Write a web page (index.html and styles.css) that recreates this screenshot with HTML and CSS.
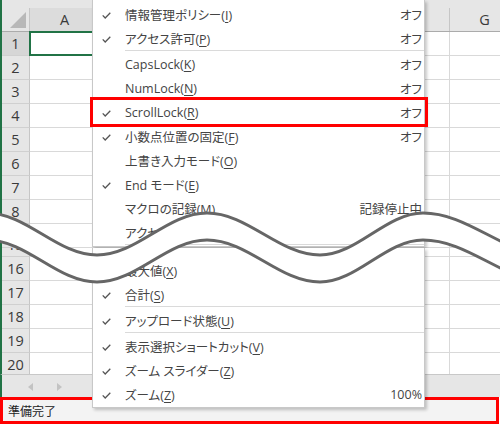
FILE: index.html
```html
<!DOCTYPE html>
<html lang="ja">
<head>
<meta charset="utf-8">
<title>Excel status bar menu</title>
<link rel="stylesheet" href="styles.css">
</head>
<body>
<div class="screen">
  <div class="panel panel-top">
    <div class="sheet">
      <div class="col-head">
        <div class="corner"><span class="tri"></span></div>
        <div class="ch sel">A</div><div class="ch"></div><div class="ch"></div><div class="ch"></div><div class="ch"></div><div class="ch"></div><div class="ch">G</div>
      </div>
      <div class="row"><div class="rh sel">1</div><div class="cell active"></div><div class="cell"></div><div class="cell"></div><div class="cell"></div><div class="cell"></div><div class="cell"></div><div class="cell"></div></div>
      <div class="row"><div class="rh">2</div><div class="cell"></div><div class="cell"></div><div class="cell"></div><div class="cell"></div><div class="cell"></div><div class="cell"></div><div class="cell"></div></div>
      <div class="row"><div class="rh">3</div><div class="cell"></div><div class="cell"></div><div class="cell"></div><div class="cell"></div><div class="cell"></div><div class="cell"></div><div class="cell"></div></div>
      <div class="row"><div class="rh">4</div><div class="cell"></div><div class="cell"></div><div class="cell"></div><div class="cell"></div><div class="cell"></div><div class="cell"></div><div class="cell"></div></div>
      <div class="row"><div class="rh">5</div><div class="cell"></div><div class="cell"></div><div class="cell"></div><div class="cell"></div><div class="cell"></div><div class="cell"></div><div class="cell"></div></div>
      <div class="row"><div class="rh">6</div><div class="cell"></div><div class="cell"></div><div class="cell"></div><div class="cell"></div><div class="cell"></div><div class="cell"></div><div class="cell"></div></div>
      <div class="row"><div class="rh">7</div><div class="cell"></div><div class="cell"></div><div class="cell"></div><div class="cell"></div><div class="cell"></div><div class="cell"></div><div class="cell"></div></div>
      <div class="row"><div class="rh">8</div><div class="cell"></div><div class="cell"></div><div class="cell"></div><div class="cell"></div><div class="cell"></div><div class="cell"></div><div class="cell"></div></div>
      <div class="row"><div class="rh">9</div><div class="cell"></div><div class="cell"></div><div class="cell"></div><div class="cell"></div><div class="cell"></div><div class="cell"></div><div class="cell"></div></div>
    </div>
    <div class="menu menu-top">
      <div class="item"><span class="chk"><svg width="9" height="7" viewBox="0 0 9 7"><path d="M0.7 3.4 L3.2 6 L8.3 0.8" fill="none" stroke="#555" stroke-width="1.3"/></svg></span><span class="label">情報管理ポリシー(<u>I</u>)</span><span class="val">オフ</span></div>
      <div class="item"><span class="chk"><svg width="9" height="7" viewBox="0 0 9 7"><path d="M0.7 3.4 L3.2 6 L8.3 0.8" fill="none" stroke="#555" stroke-width="1.3"/></svg></span><span class="label">アクセス許可(<u>P</u>)</span><span class="val">オフ</span></div>
      <div class="sep"></div>
      <div class="item"><span class="chk"></span><span class="label">CapsLock(<u>K</u>)</span><span class="val">オフ</span></div>
      <div class="item"><span class="chk"></span><span class="label">NumLock(<u>N</u>)</span><span class="val">オフ</span></div>
      <div class="item hl"><span class="chk"><svg width="9" height="7" viewBox="0 0 9 7"><path d="M0.7 3.4 L3.2 6 L8.3 0.8" fill="none" stroke="#555" stroke-width="1.3"/></svg></span><span class="label">ScrollLock(<u>R</u>)</span><span class="val">オフ</span></div>
      <div class="item"><span class="chk"><svg width="9" height="7" viewBox="0 0 9 7"><path d="M0.7 3.4 L3.2 6 L8.3 0.8" fill="none" stroke="#555" stroke-width="1.3"/></svg></span><span class="label">小数点位置の固定(<u>F</u>)</span><span class="val">オフ</span></div>
      <div class="item"><span class="chk"></span><span class="label">上書き入力モード(<u>O</u>)</span><span class="val"></span></div>
      <div class="item"><span class="chk"><svg width="9" height="7" viewBox="0 0 9 7"><path d="M0.7 3.4 L3.2 6 L8.3 0.8" fill="none" stroke="#555" stroke-width="1.3"/></svg></span><span class="label">End モード(<u>E</u>)</span><span class="val"></span></div>
      <div class="item"><span class="chk"></span><span class="label">マクロの記録(<u>M</u>)</span><span class="val">記録停止中</span></div>
      <div class="item"><span class="chk"></span><span class="label">アクセシビリティ チェック</span><span class="val"></span></div>
      <div class="sep"></div>
    </div>
  </div>

  <div class="panel panel-bottom">
    <div class="sheet sheet-bottom">
      <div class="rows-bottom">
        <div class="row"><div class="rh">15</div><div class="cell"></div><div class="cell"></div><div class="cell"></div><div class="cell"></div><div class="cell"></div><div class="cell"></div><div class="cell"></div></div>
        <div class="row"><div class="rh">16</div><div class="cell"></div><div class="cell"></div><div class="cell"></div><div class="cell"></div><div class="cell"></div><div class="cell"></div><div class="cell"></div></div>
        <div class="row"><div class="rh">17</div><div class="cell"></div><div class="cell"></div><div class="cell"></div><div class="cell"></div><div class="cell"></div><div class="cell"></div><div class="cell"></div></div>
        <div class="row"><div class="rh">18</div><div class="cell"></div><div class="cell"></div><div class="cell"></div><div class="cell"></div><div class="cell"></div><div class="cell"></div><div class="cell"></div></div>
        <div class="row"><div class="rh">19</div><div class="cell"></div><div class="cell"></div><div class="cell"></div><div class="cell"></div><div class="cell"></div><div class="cell"></div><div class="cell"></div></div>
        <div class="row"><div class="rh">20</div><div class="cell"></div><div class="cell"></div><div class="cell"></div><div class="cell"></div><div class="cell"></div><div class="cell"></div><div class="cell"></div></div>
      </div>
    </div>
    <div class="tabbar">
      <svg class="arrow" width="5" height="8" viewBox="0 0 5 8"><path d="M5 0 L0 4 L5 8 Z" fill="#c3c3c3"/></svg>
      <svg class="arrow" width="5" height="8" viewBox="0 0 5 8"><path d="M0 0 L5 4 L0 8 Z" fill="#c3c3c3"/></svg>
    </div>
    <div class="status">準備完了</div>

    <div class="menu menu-bottom">
      <div class="item"><span class="chk"><svg width="9" height="7" viewBox="0 0 9 7"><path d="M0.7 3.4 L3.2 6 L8.3 0.8" fill="none" stroke="#555" stroke-width="1.3"/></svg></span><span class="label">最大値(<u>X</u>)</span><span class="val"></span></div>
      <div class="item"><span class="chk"><svg width="9" height="7" viewBox="0 0 9 7"><path d="M0.7 3.4 L3.2 6 L8.3 0.8" fill="none" stroke="#555" stroke-width="1.3"/></svg></span><span class="label">合計(<u>S</u>)</span><span class="val"></span></div>
      <div class="sep"></div>
      <div class="item"><span class="chk"><svg width="9" height="7" viewBox="0 0 9 7"><path d="M0.7 3.4 L3.2 6 L8.3 0.8" fill="none" stroke="#555" stroke-width="1.3"/></svg></span><span class="label">アップロード状態(<u>U</u>)</span><span class="val"></span></div>
      <div class="sep"></div>
      <div class="item"><span class="chk"><svg width="9" height="7" viewBox="0 0 9 7"><path d="M0.7 3.4 L3.2 6 L8.3 0.8" fill="none" stroke="#555" stroke-width="1.3"/></svg></span><span class="label">表示選択ショートカット(<u>V</u>)</span><span class="val"></span></div>
      <div class="item"><span class="chk"><svg width="9" height="7" viewBox="0 0 9 7"><path d="M0.7 3.4 L3.2 6 L8.3 0.8" fill="none" stroke="#555" stroke-width="1.3"/></svg></span><span class="label">ズーム スライダー(<u>Z</u>)</span><span class="val"></span></div>
      <div class="item"><span class="chk"><svg width="9" height="7" viewBox="0 0 9 7"><path d="M0.7 3.4 L3.2 6 L8.3 0.8" fill="none" stroke="#555" stroke-width="1.3"/></svg></span><span class="label">ズーム(<u>Z</u>)</span><span class="val">100%</span></div>
    </div>
  </div>

  <svg class="wave" width="500" height="424" viewBox="0 0 500 424">
    <path d="M -13 213 C 27 213 57 255 97 255 C 137 255 167 213 207 213 C 248 213 279 255 320 255 C 357 255 386 213 423 213 C 469 213 504 255 550 255 L 550 282 C 504 282 469 240 423 240 C 386 240 357 282 320 282 C 279 282 248 240 207 240 C 167 240 137 282 97 282 C 57 282 27 240 -13 240 Z" fill="#fff"/>
    <path d="M -13 213 C 27 213 57 255 97 255 C 137 255 167 213 207 213 C 248 213 279 255 320 255 C 357 255 386 213 423 213 C 469 213 504 255 550 255" fill="none" stroke="#666" stroke-width="3"/>
    <path d="M -13 240 C 27 240 57 282 97 282 C 137 282 167 240 207 240 C 248 240 279 282 320 282 C 357 282 386 240 423 240 C 469 240 504 282 550 282" fill="none" stroke="#666" stroke-width="3"/>
  </svg>
</div>
</body>
</html>
```

FILE: styles.css
```css
* { box-sizing: border-box; }
html, body { margin: 0; padding: 0; }
body {
  width: 500px;
  height: 424px;
  overflow: hidden;
  background: #fff;
  font-family: "Open Sans", "Noto Sans CJK JP", sans-serif;
  font-feature-settings: "palt" 1;
}
.screen {
  position: relative;
  width: 500px;
  height: 424px;
  overflow: hidden;
}
.panel { position: relative; overflow: hidden; }
.panel-top { height: 248px; }
.panel-bottom {
  height: 176px;
  display: flex;
  flex-direction: column;
}

/* sheet grid */
.sheet {
  border-left: 2px solid #217346;
  background: #fff;
}
.col-head {
  display: flex;
  height: 32px;
  padding-top: 8px;
  background: #e6e6e6;
  border-bottom: 1px solid #ababab;
}
.corner {
  width: 28px;
  flex: none;
  position: relative;
  border-right: 1px solid #c6c6c6;
}
.tri {
  position: absolute;
  right: 3px;
  bottom: 3px;
  width: 0;
  height: 0;
  border-left: 16px solid transparent;
  border-bottom: 16px solid #b8b8b8;
}
.ch {
  width: 70px;
  flex: none;
  border-right: 1px solid #c6c6c6;
  text-align: center;
  line-height: 23px;
  font-size: 14.5px;
  color: #3a3a3a;
}
.ch.sel { background: #dcdcdc; }
.row { display: flex; height: 24px; }
.rh {
  width: 28px;
  flex: none;
  background: #e6e6e6;
  border-right: 1px solid #c6c6c6;
  border-bottom: 1px solid #d0d0d0;
  text-align: center;
  line-height: 23px;
  font-size: 14.5px;
  color: #3a3a3a;
}
.rh.sel { background: #d6d6d6; }
.cell {
  width: 70px;
  flex: none;
  border-right: 1px solid #d9d9d9;
  border-bottom: 1px solid #d9d9d9;
}
.cell.active { position: relative; }
.cell.active::after {
  content: "";
  position: absolute;
  inset: -1px;
  border: 2px solid #217346;
  z-index: 1;
}
.sheet-bottom { height: 126px; flex: none; overflow: hidden; }
.rows-bottom { margin-top: -15px; }

.tabbar {
  height: 23px;
  flex: none;
  background: #e6e6e6;
  border-left: 2px solid #217346;
  border-top: 1px solid #c8c8c8;
  display: flex;
  align-items: center;
  gap: 24px;
  padding-left: 26px;
  padding-top: 2px;
}
.status {
  height: 27px;
  flex: none;
  margin-right: 1px;
  background: #f3f3f3;
  border: 3px solid #ff0000;
  padding-left: 5px;
  display: flex;
  align-items: center;
  font-size: 12px;
  color: #222;
}

/* context menu */
.menu {
  position: absolute;
  left: 92px;
  width: 333px;
  background: #fff;
  border: 1px solid #c8c8c8;
  border-top: none;
  box-shadow: 2px 2px 3px rgba(0, 0, 0, 0.22);
  z-index: 5;
  color: #444;
  font-size: 12.5px;
}
.menu-top { top: 0; padding-top: 2px; }
.menu-bottom { top: 0; padding-top: 10px; padding-bottom: 1px; }
.item {
  display: flex;
  align-items: center;
  height: 24px;
  position: relative;
  white-space: nowrap;
}
.chk {
  width: 32px;
  flex: none;
  padding-left: 9px;
  padding-top: 3px;
  display: flex;
  align-items: center;
}
.label { flex: 1; }
.label u { text-underline-offset: 2px; }
.val { padding-right: 2px; }
.sep {
  height: 2px;
  margin-left: 32px;
  border-top: 1px solid #dadada;
}
.item.hl::after {
  content: "";
  position: absolute;
  left: -3px;
  right: -4px;
  top: -3px;
  bottom: -3px;
  border: 3px solid #ff0000;
}

.wave {
  position: absolute;
  left: 0;
  top: 0;
  z-index: 10;
  pointer-events: none;
}
```
